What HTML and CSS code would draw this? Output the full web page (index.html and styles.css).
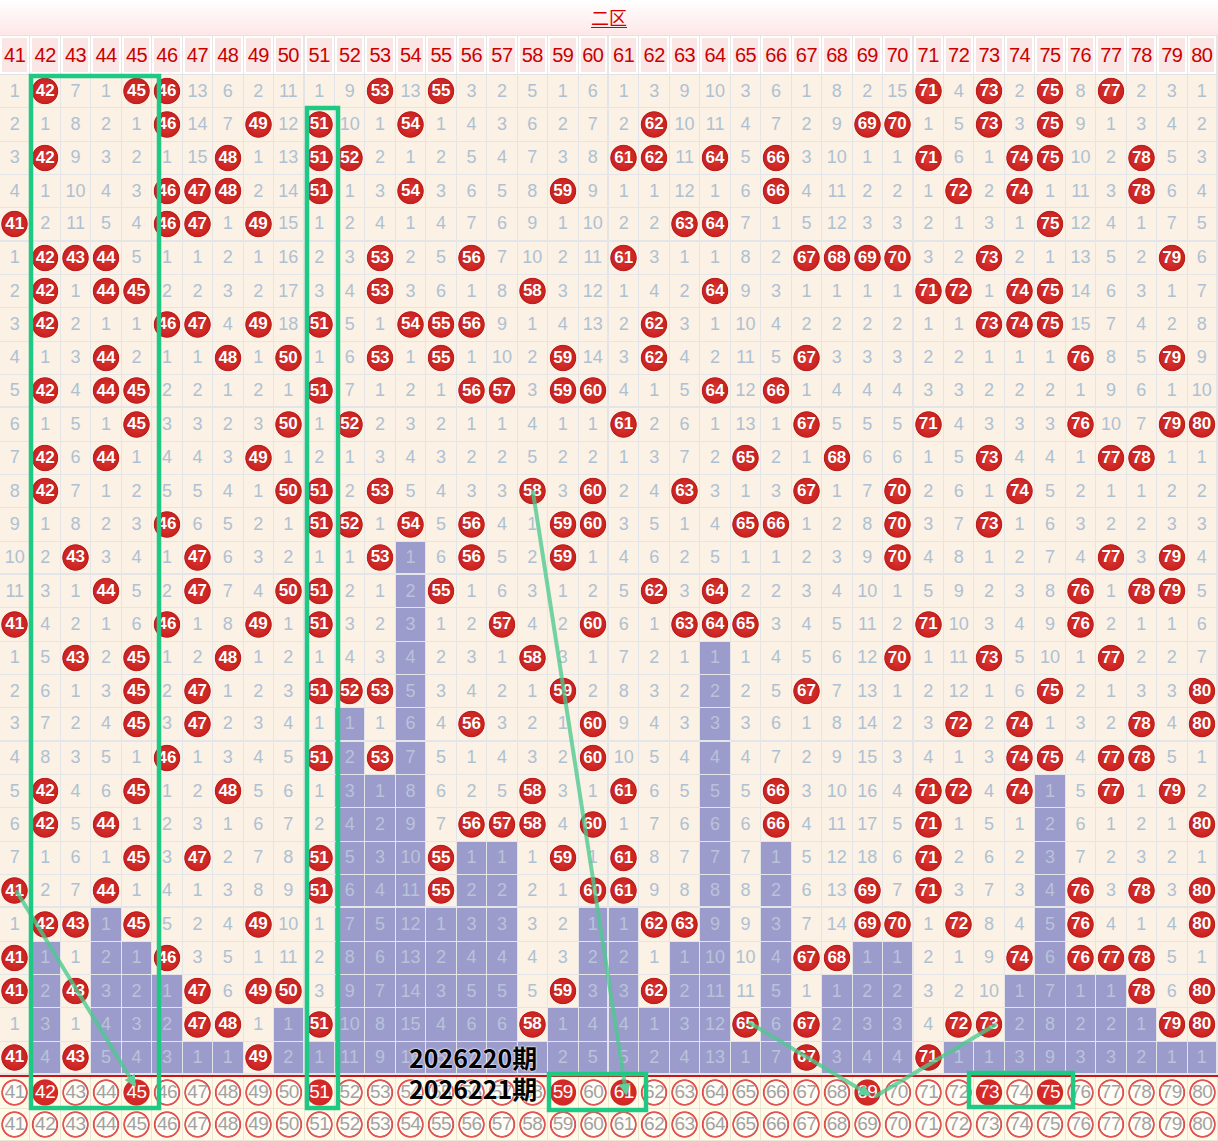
FILE: index.html
```html
<!DOCTYPE html>
<html lang="zh">
<head>
<meta charset="utf-8">
<title>二区走势</title>
<link rel="stylesheet" href="styles.css">
</head>
<body>
<div class="page">
  <div class="title"><span class="title-text">二区</span></div>
  <div class="head"><i>41</i><i>42</i><i>43</i><i>44</i><i>45</i><i>46</i><i>47</i><i>48</i><i>49</i><i>50</i><i>51</i><i>52</i><i>53</i><i>54</i><i>55</i><i>56</i><i>57</i><i>58</i><i>59</i><i>60</i><i>61</i><i>62</i><i>63</i><i>64</i><i>65</i><i>66</i><i>67</i><i>68</i><i>69</i><i>70</i><i>71</i><i>72</i><i>73</i><i>74</i><i>75</i><i>76</i><i>77</i><i>78</i><i>79</i><i>80</i></div>
  <div class="rows">
    <div class="row"><i>1</i><b>42</b><i>7</i><i>1</i><b>45</b><b>46</b><i>13</i><i>6</i><i>2</i><i>11</i><i>1</i><i>9</i><b>53</b><i>13</i><b>55</b><i>3</i><i>2</i><i>5</i><i>1</i><i>6</i><i>1</i><i>3</i><i>9</i><i>10</i><i>3</i><i>6</i><i>1</i><i>8</i><i>2</i><i>15</i><b>71</b><i>4</i><b>73</b><i>2</i><b>75</b><i>8</i><b>77</b><i>2</i><i>3</i><i>1</i></div>
    <div class="row"><i>2</i><i>1</i><i>8</i><i>2</i><i>1</i><b>46</b><i>14</i><i>7</i><b>49</b><i>12</i><b>51</b><i>10</i><i>1</i><b>54</b><i>1</i><i>4</i><i>3</i><i>6</i><i>2</i><i>7</i><i>2</i><b>62</b><i>10</i><i>11</i><i>4</i><i>7</i><i>2</i><i>9</i><b>69</b><b>70</b><i>1</i><i>5</i><b>73</b><i>3</i><b>75</b><i>9</i><i>1</i><i>3</i><i>4</i><i>2</i></div>
    <div class="row"><i>3</i><b>42</b><i>9</i><i>3</i><i>2</i><i>1</i><i>15</i><b>48</b><i>1</i><i>13</i><b>51</b><b>52</b><i>2</i><i>1</i><i>2</i><i>5</i><i>4</i><i>7</i><i>3</i><i>8</i><b>61</b><b>62</b><i>11</i><b>64</b><i>5</i><b>66</b><i>3</i><i>10</i><i>1</i><i>1</i><b>71</b><i>6</i><i>1</i><b>74</b><b>75</b><i>10</i><i>2</i><b>78</b><i>5</i><i>3</i></div>
    <div class="row"><i>4</i><i>1</i><i>10</i><i>4</i><i>3</i><b>46</b><b>47</b><b>48</b><i>2</i><i>14</i><b>51</b><i>1</i><i>3</i><b>54</b><i>3</i><i>6</i><i>5</i><i>8</i><b>59</b><i>9</i><i>1</i><i>1</i><i>12</i><i>1</i><i>6</i><b>66</b><i>4</i><i>11</i><i>2</i><i>2</i><i>1</i><b>72</b><i>2</i><b>74</b><i>1</i><i>11</i><i>3</i><b>78</b><i>6</i><i>4</i></div>
    <div class="row"><b>41</b><i>2</i><i>11</i><i>5</i><i>4</i><b>46</b><b>47</b><i>1</i><b>49</b><i>15</i><i>1</i><i>2</i><i>4</i><i>1</i><i>4</i><i>7</i><i>6</i><i>9</i><i>1</i><i>10</i><i>2</i><i>2</i><b>63</b><b>64</b><i>7</i><i>1</i><i>5</i><i>12</i><i>3</i><i>3</i><i>2</i><i>1</i><i>3</i><i>1</i><b>75</b><i>12</i><i>4</i><i>1</i><i>7</i><i>5</i></div>
    <div class="row"><i>1</i><b>42</b><b>43</b><b>44</b><i>5</i><i>1</i><i>1</i><i>2</i><i>1</i><i>16</i><i>2</i><i>3</i><b>53</b><i>2</i><i>5</i><b>56</b><i>7</i><i>10</i><i>2</i><i>11</i><b>61</b><i>3</i><i>1</i><i>1</i><i>8</i><i>2</i><b>67</b><b>68</b><b>69</b><b>70</b><i>3</i><i>2</i><b>73</b><i>2</i><i>1</i><i>13</i><i>5</i><i>2</i><b>79</b><i>6</i></div>
    <div class="row"><i>2</i><b>42</b><i>1</i><b>44</b><b>45</b><i>2</i><i>2</i><i>3</i><i>2</i><i>17</i><i>3</i><i>4</i><b>53</b><i>3</i><i>6</i><i>1</i><i>8</i><b>58</b><i>3</i><i>12</i><i>1</i><i>4</i><i>2</i><b>64</b><i>9</i><i>3</i><i>1</i><i>1</i><i>1</i><i>1</i><b>71</b><b>72</b><i>1</i><b>74</b><b>75</b><i>14</i><i>6</i><i>3</i><i>1</i><i>7</i></div>
    <div class="row"><i>3</i><b>42</b><i>2</i><i>1</i><i>1</i><b>46</b><b>47</b><i>4</i><b>49</b><i>18</i><b>51</b><i>5</i><i>1</i><b>54</b><b>55</b><b>56</b><i>9</i><i>1</i><i>4</i><i>13</i><i>2</i><b>62</b><i>3</i><i>1</i><i>10</i><i>4</i><i>2</i><i>2</i><i>2</i><i>2</i><i>1</i><i>1</i><b>73</b><b>74</b><b>75</b><i>15</i><i>7</i><i>4</i><i>2</i><i>8</i></div>
    <div class="row"><i>4</i><i>1</i><i>3</i><b>44</b><i>2</i><i>1</i><i>1</i><b>48</b><i>1</i><b>50</b><i>1</i><i>6</i><b>53</b><i>1</i><b>55</b><i>1</i><i>10</i><i>2</i><b>59</b><i>14</i><i>3</i><b>62</b><i>4</i><i>2</i><i>11</i><i>5</i><b>67</b><i>3</i><i>3</i><i>3</i><i>2</i><i>2</i><i>1</i><i>1</i><i>1</i><b>76</b><i>8</i><i>5</i><b>79</b><i>9</i></div>
    <div class="row"><i>5</i><b>42</b><i>4</i><b>44</b><b>45</b><i>2</i><i>2</i><i>1</i><i>2</i><i>1</i><b>51</b><i>7</i><i>1</i><i>2</i><i>1</i><b>56</b><b>57</b><i>3</i><b>59</b><b>60</b><i>4</i><i>1</i><i>5</i><b>64</b><i>12</i><b>66</b><i>1</i><i>4</i><i>4</i><i>4</i><i>3</i><i>3</i><i>2</i><i>2</i><i>2</i><i>1</i><i>9</i><i>6</i><i>1</i><i>10</i></div>
    <div class="row"><i>6</i><i>1</i><i>5</i><i>1</i><b>45</b><i>3</i><i>3</i><i>2</i><i>3</i><b>50</b><i>1</i><b>52</b><i>2</i><i>3</i><i>2</i><i>1</i><i>1</i><i>4</i><i>1</i><i>1</i><b>61</b><i>2</i><i>6</i><i>1</i><i>13</i><i>1</i><b>67</b><i>5</i><i>5</i><i>5</i><b>71</b><i>4</i><i>3</i><i>3</i><i>3</i><b>76</b><i>10</i><i>7</i><b>79</b><b>80</b></div>
    <div class="row"><i>7</i><b>42</b><i>6</i><b>44</b><i>1</i><i>4</i><i>4</i><i>3</i><b>49</b><i>1</i><i>2</i><i>1</i><i>3</i><i>4</i><i>3</i><i>2</i><i>2</i><i>5</i><i>2</i><i>2</i><i>1</i><i>3</i><i>7</i><i>2</i><b>65</b><i>2</i><i>1</i><b>68</b><i>6</i><i>6</i><i>1</i><i>5</i><b>73</b><i>4</i><i>4</i><i>1</i><b>77</b><b>78</b><i>1</i><i>1</i></div>
    <div class="row"><i>8</i><b>42</b><i>7</i><i>1</i><i>2</i><i>5</i><i>5</i><i>4</i><i>1</i><b>50</b><b>51</b><i>2</i><b>53</b><i>5</i><i>4</i><i>3</i><i>3</i><b>58</b><i>3</i><b>60</b><i>2</i><i>4</i><b>63</b><i>3</i><i>1</i><i>3</i><b>67</b><i>1</i><i>7</i><b>70</b><i>2</i><i>6</i><i>1</i><b>74</b><i>5</i><i>2</i><i>1</i><i>1</i><i>2</i><i>2</i></div>
    <div class="row"><i>9</i><i>1</i><i>8</i><i>2</i><i>3</i><b>46</b><i>6</i><i>5</i><i>2</i><i>1</i><b>51</b><b>52</b><i>1</i><b>54</b><i>5</i><b>56</b><i>4</i><i>1</i><b>59</b><b>60</b><i>3</i><i>5</i><i>1</i><i>4</i><b>65</b><b>66</b><i>1</i><i>2</i><i>8</i><b>70</b><i>3</i><i>7</i><b>73</b><i>1</i><i>6</i><i>3</i><i>2</i><i>2</i><i>3</i><i>3</i></div>
    <div class="row"><i>10</i><i>2</i><b>43</b><i>3</i><i>4</i><i>1</i><b>47</b><i>6</i><i>3</i><i>2</i><i>1</i><i>1</i><b>53</b><u>1</u><i>6</i><b>56</b><i>5</i><i>2</i><b>59</b><i>1</i><i>4</i><i>6</i><i>2</i><i>5</i><i>1</i><i>1</i><i>2</i><i>3</i><i>9</i><b>70</b><i>4</i><i>8</i><i>1</i><i>2</i><i>7</i><i>4</i><b>77</b><i>3</i><b>79</b><i>4</i></div>
    <div class="row"><i>11</i><i>3</i><i>1</i><b>44</b><i>5</i><i>2</i><b>47</b><i>7</i><i>4</i><b>50</b><b>51</b><i>2</i><i>1</i><u>2</u><b>55</b><i>1</i><i>6</i><i>3</i><i>1</i><i>2</i><i>5</i><b>62</b><i>3</i><b>64</b><i>2</i><i>2</i><i>3</i><i>4</i><i>10</i><i>1</i><i>5</i><i>9</i><i>2</i><i>3</i><i>8</i><b>76</b><i>1</i><b>78</b><b>79</b><i>5</i></div>
    <div class="row"><b>41</b><i>4</i><i>2</i><i>1</i><i>6</i><b>46</b><i>1</i><i>8</i><b>49</b><i>1</i><b>51</b><i>3</i><i>2</i><u>3</u><i>1</i><i>2</i><b>57</b><i>4</i><i>2</i><b>60</b><i>6</i><i>1</i><b>63</b><b>64</b><b>65</b><i>3</i><i>4</i><i>5</i><i>11</i><i>2</i><b>71</b><i>10</i><i>3</i><i>4</i><i>9</i><b>76</b><i>2</i><i>1</i><i>1</i><i>6</i></div>
    <div class="row"><i>1</i><i>5</i><b>43</b><i>2</i><b>45</b><i>1</i><i>2</i><b>48</b><i>1</i><i>2</i><i>1</i><i>4</i><i>3</i><u>4</u><i>2</i><i>3</i><i>1</i><b>58</b><i>3</i><i>1</i><i>7</i><i>2</i><i>1</i><u>1</u><i>1</i><i>4</i><i>5</i><i>6</i><i>12</i><b>70</b><i>1</i><i>11</i><b>73</b><i>5</i><i>10</i><i>1</i><b>77</b><i>2</i><i>2</i><i>7</i></div>
    <div class="row"><i>2</i><i>6</i><i>1</i><i>3</i><b>45</b><i>2</i><b>47</b><i>1</i><i>2</i><i>3</i><b>51</b><b>52</b><b>53</b><u>5</u><i>3</i><i>4</i><i>2</i><i>1</i><b>59</b><i>2</i><i>8</i><i>3</i><i>2</i><u>2</u><i>2</i><i>5</i><b>67</b><i>7</i><i>13</i><i>1</i><i>2</i><i>12</i><i>1</i><i>6</i><b>75</b><i>2</i><i>1</i><i>3</i><i>3</i><b>80</b></div>
    <div class="row"><i>3</i><i>7</i><i>2</i><i>4</i><b>45</b><i>3</i><b>47</b><i>2</i><i>3</i><i>4</i><i>1</i><u>1</u><i>1</i><u>6</u><i>4</i><b>56</b><i>3</i><i>2</i><i>1</i><b>60</b><i>9</i><i>4</i><i>3</i><u>3</u><i>3</i><i>6</i><i>1</i><i>8</i><i>14</i><i>2</i><i>3</i><b>72</b><i>2</i><b>74</b><i>1</i><i>3</i><i>2</i><b>78</b><i>4</i><b>80</b></div>
    <div class="row"><i>4</i><i>8</i><i>3</i><i>5</i><i>1</i><b>46</b><i>1</i><i>3</i><i>4</i><i>5</i><b>51</b><u>2</u><b>53</b><u>7</u><i>5</i><i>1</i><i>4</i><i>3</i><i>2</i><b>60</b><i>10</i><i>5</i><i>4</i><u>4</u><i>4</i><i>7</i><i>2</i><i>9</i><i>15</i><i>3</i><i>4</i><i>1</i><i>3</i><b>74</b><b>75</b><i>4</i><b>77</b><b>78</b><i>5</i><i>1</i></div>
    <div class="row"><i>5</i><b>42</b><i>4</i><i>6</i><b>45</b><i>1</i><i>2</i><b>48</b><i>5</i><i>6</i><i>1</i><u>3</u><u>1</u><u>8</u><i>6</i><i>2</i><i>5</i><b>58</b><i>3</i><i>1</i><b>61</b><i>6</i><i>5</i><u>5</u><i>5</i><b>66</b><i>3</i><i>10</i><i>16</i><i>4</i><b>71</b><b>72</b><i>4</i><b>74</b><u>1</u><i>5</i><b>77</b><i>1</i><b>79</b><i>2</i></div>
    <div class="row"><i>6</i><b>42</b><i>5</i><b>44</b><i>1</i><i>2</i><i>3</i><i>1</i><i>6</i><i>7</i><i>2</i><u>4</u><u>2</u><u>9</u><i>7</i><b>56</b><b>57</b><b>58</b><i>4</i><b>60</b><i>1</i><i>7</i><i>6</i><u>6</u><i>6</i><b>66</b><i>4</i><i>11</i><i>17</i><i>5</i><b>71</b><i>1</i><i>5</i><i>1</i><u>2</u><i>6</i><i>1</i><i>2</i><i>1</i><b>80</b></div>
    <div class="row"><i>7</i><i>1</i><i>6</i><i>1</i><b>45</b><i>3</i><b>47</b><i>2</i><i>7</i><i>8</i><b>51</b><u>5</u><u>3</u><u>10</u><b>55</b><u>1</u><u>1</u><i>1</i><b>59</b><i>1</i><b>61</b><i>8</i><i>7</i><u>7</u><i>7</i><u>1</u><i>5</i><i>12</i><i>18</i><i>6</i><b>71</b><i>2</i><i>6</i><i>2</i><u>3</u><i>7</i><i>2</i><i>3</i><i>2</i><i>1</i></div>
    <div class="row"><b>41</b><i>2</i><i>7</i><b>44</b><i>1</i><i>4</i><i>1</i><i>3</i><i>8</i><i>9</i><b>51</b><u>6</u><u>4</u><u>11</u><b>55</b><u>2</u><u>2</u><i>2</i><i>1</i><b>60</b><b>61</b><i>9</i><i>8</i><u>8</u><i>8</i><u>2</u><i>6</i><i>13</i><b>69</b><i>7</i><b>71</b><i>3</i><i>7</i><i>3</i><u>4</u><b>76</b><i>3</i><b>78</b><i>3</i><b>80</b></div>
    <div class="row"><i>1</i><b>42</b><b>43</b><u>1</u><b>45</b><i>5</i><i>2</i><i>4</i><b>49</b><i>10</i><i>1</i><u>7</u><u>5</u><u>12</u><u>1</u><u>3</u><u>3</u><i>3</i><i>2</i><u>1</u><u>1</u><b>62</b><b>63</b><u>9</u><i>9</i><u>3</u><i>7</i><i>14</i><b>69</b><b>70</b><i>1</i><b>72</b><i>8</i><i>4</i><u>5</u><b>76</b><i>4</i><i>1</i><i>4</i><b>80</b></div>
    <div class="row"><b>41</b><u>1</u><i>1</i><u>2</u><u>1</u><b>46</b><i>3</i><i>5</i><i>1</i><i>11</i><i>2</i><u>8</u><u>6</u><u>13</u><u>2</u><u>4</u><u>4</u><i>4</i><i>3</i><u>2</u><u>2</u><i>1</i><u>1</u><u>10</u><i>10</i><u>4</u><b>67</b><b>68</b><u>1</u><u>1</u><i>2</i><i>1</i><i>9</i><b>74</b><u>6</u><b>76</b><b>77</b><b>78</b><i>5</i><i>1</i></div>
    <div class="row"><b>41</b><u>2</u><b>43</b><u>3</u><u>2</u><u>1</u><b>47</b><i>6</i><b>49</b><b>50</b><i>3</i><u>9</u><u>7</u><u>14</u><u>3</u><u>5</u><u>5</u><i>5</i><b>59</b><u>3</u><u>3</u><b>62</b><u>2</u><u>11</u><i>11</i><u>5</u><i>1</i><u>1</u><u>2</u><u>2</u><i>3</i><i>2</i><i>10</i><u>1</u><u>7</u><u>1</u><u>1</u><b>78</b><i>6</i><b>80</b></div>
    <div class="row"><i>1</i><u>3</u><i>1</i><u>4</u><u>3</u><u>2</u><b>47</b><b>48</b><i>1</i><u>1</u><b>51</b><u>10</u><u>8</u><u>15</u><u>4</u><u>6</u><u>6</u><b>58</b><u>1</u><u>4</u><u>4</u><u>1</u><u>3</u><u>12</u><b>65</b><u>6</u><b>67</b><u>2</u><u>3</u><u>3</u><i>4</i><b>72</b><b>73</b><u>2</u><u>8</u><u>2</u><u>2</u><u>1</u><b>79</b><b>80</b></div>
    <div class="row"><b>41</b><u>4</u><b>43</b><u>5</u><u>4</u><u>3</u><u>1</u><u>1</u><b>49</b><u>2</u><u>1</u><u>11</u><u>9</u><u>16</u><u>5</u><u>7</u><u>7</u><u>1</u><u>2</u><u>5</u><u>5</u><u>2</u><u>4</u><u>13</u><u>1</u><u>7</u><b>67</b><u>3</u><u>4</u><u>4</u><b>71</b><u>1</u><u>1</u><u>3</u><u>9</u><u>3</u><u>3</u><u>2</u><u>1</u><u>1</u></div>
  </div>
  <div class="draws">
    <div class="draw"><i>41</i><b>42</b><i>43</i><i>44</i><b>45</b><i>46</i><i>47</i><i>48</i><i>49</i><i>50</i><b>51</b><i>52</i><i>53</i><i>54</i><i>55</i><i>56</i><i>57</i><i>58</i><b>59</b><i>60</i><b>61</b><i>62</i><i>63</i><i>64</i><i>65</i><i>66</i><i>67</i><i>68</i><b>69</b><i>70</i><i>71</i><i>72</i><b>73</b><i>74</i><b>75</b><i>76</i><i>77</i><i>78</i><i>79</i><i>80</i></div>
    <div class="draw"><i>41</i><i>42</i><i>43</i><i>44</i><i>45</i><i>46</i><i>47</i><i>48</i><i>49</i><i>50</i><i>51</i><i>52</i><i>53</i><i>54</i><i>55</i><i>56</i><i>57</i><i>58</i><i>59</i><i>60</i><i>61</i><i>62</i><i>63</i><i>64</i><i>65</i><i>66</i><i>67</i><i>68</i><i>69</i><i>70</i><i>71</i><i>72</i><i>73</i><i>74</i><i>75</i><i>76</i><i>77</i><i>78</i><i>79</i><i>80</i></div>
  </div>

  <svg class="overlay" width="1218" height="1141" viewBox="0 0 1218 1141" aria-hidden="true">
    <defs>
      <marker id="ah" viewBox="0 0 10 10" refX="7" refY="5" markerWidth="3" markerHeight="3" orient="auto">
        <path d="M0 0L10 5L0 10z" fill="#5fcf9b"/>
      </marker>
    </defs>
    <g class="paths">
      <line x1="17" y1="892" x2="134" y2="1084" marker-end="url(#ah)"/>
      <line x1="533" y1="492" x2="626" y2="1092" marker-end="url(#ah)"/>
      <line x1="750" y1="1023" x2="868" y2="1094" marker-end="url(#ah)"/>
      <line x1="876" y1="1096" x2="995" y2="1025"/>
    </g>
    <g class="boxes">
      <rect x="31" y="76" width="128" height="1032"/>
      <rect x="307" y="108" width="31" height="1000"/>
      <rect x="549" y="1074" width="97" height="36"/>
      <rect x="969" y="1073" width="104" height="34"/>
    </g>
  </svg>

  <div class="label">2026220期<br>2026221期</div>
</div>
</body>
</html>
```

FILE: styles.css
```css
* { box-sizing: border-box; }

body {
  margin: 0;
  background: #fff;
  font-family: "Liberation Sans", Arial, sans-serif;
}

.page {
  position: relative;
  width: 1218px;
  height: 1141px;
  overflow: hidden;
}

/* title */
.title {
  height: 35px;
  background: linear-gradient(#ffffff, #fde7e7);
  text-align: center;
}
.title-text {
  color: #d40000;
  font: 18px/35px "Noto Sans CJK SC", sans-serif;
  text-decoration: underline;
  text-underline-offset: 2px;
}

/* number header */
.head {
  display: grid;
  grid-template-columns: repeat(40, 1fr);
  height: 40px;
  border-top: 1px solid #e4e4e4;
  background: #fff;
}
.head > i {
  display: flex;
  align-items: center;
  justify-content: center;
  font-style: normal;
  background: #fbe6e6;
  box-shadow: inset 0 0 0 2px #fff;
  border-right: 1px solid #e6e6e6;
  border-bottom: 1px solid #e2e2e2;
  color: #c80000;
  font-size: 20px;
  letter-spacing: -0.5px;
}
.head > i:nth-child(10n) { border-right-width: 2px; }

/* data rows */
.row {
  display: grid;
  grid-template-columns: repeat(40, 1fr);
  height: 33.3333px;
}
.row > * {
  display: flex;
  align-items: center;
  justify-content: center;
  font-style: normal;
  font-weight: normal;
  text-decoration: none;
  border-right: 1px solid #e3e5e9;
  border-bottom: 1px solid #e3e5e9;
  background-color: #fbf1e5;
  color: #aec1d3;
  font-size: 18px;
  white-space: nowrap;
}
.row > :nth-child(10n) { border-right-width: 2px; }
.row:nth-child(5n) > * { border-bottom-width: 2px; }

.row > b {
  color: #fff;
  font-weight: bold;
  font-size: 17px;
  background: radial-gradient(circle 13.6px at 50% 50%, #e23c37 0, #d52c29 7px, #c92322 11.5px, #bd1d1d 12.8px, rgba(189, 29, 29, 0) 13.6px), #fbf1e5;
  text-shadow: 0 0 2px rgba(110, 0, 0, 0.45);
}
.row > u {
  background-color: #9c9ccc;
  color: #b8c3d9;
}

/* draw rows */
.draws {
  border-top: 2px solid #cc1414;
}
.draw {
  display: grid;
  grid-template-columns: repeat(40, 1fr);
  height: 32px;
  background: #fffbe8;
}
.draw > * {
  display: flex;
  align-items: center;
  justify-content: center;
  font-style: normal;
  font-weight: normal;
  border-right: 1px solid #ebe6d3;
  border-bottom: 1px solid #ebe6d3;
  color: #a2a2a2;
  font-size: 19px;
  letter-spacing: -0.5px;
  background: radial-gradient(circle 13.6px at 50% 50%, rgba(255, 255, 255, 0.6) 0, rgba(255, 255, 255, 0.6) 11px, #e46060 11.6px, #de4a4a 12.8px, rgba(222, 74, 74, 0) 13.6px);
}
.draw > b {
  color: #fff;
  background: radial-gradient(circle 13.6px at 50% 50%, #dc2f2c 0, #d02826 12.6px, rgba(208, 40, 38, 0) 13.6px);
}

/* overlays */
.overlay {
  position: absolute;
  left: 0;
  top: 0;
  pointer-events: none;
}
.paths line {
  stroke: #4cc98e;
  stroke-opacity: 0.78;
  stroke-width: 4;
  stroke-linecap: round;
}
.boxes rect {
  fill: none;
  stroke: #1ec984;
  stroke-width: 4.5;
}

.label {
  position: absolute;
  left: 409px;
  top: 1042px;
  font: 700 25px/31px "Noto Sans CJK SC", sans-serif;
  color: #000;
  text-shadow: 0 0 2px #fff, 0 0 2px #fff;
  white-space: nowrap;
}
```
